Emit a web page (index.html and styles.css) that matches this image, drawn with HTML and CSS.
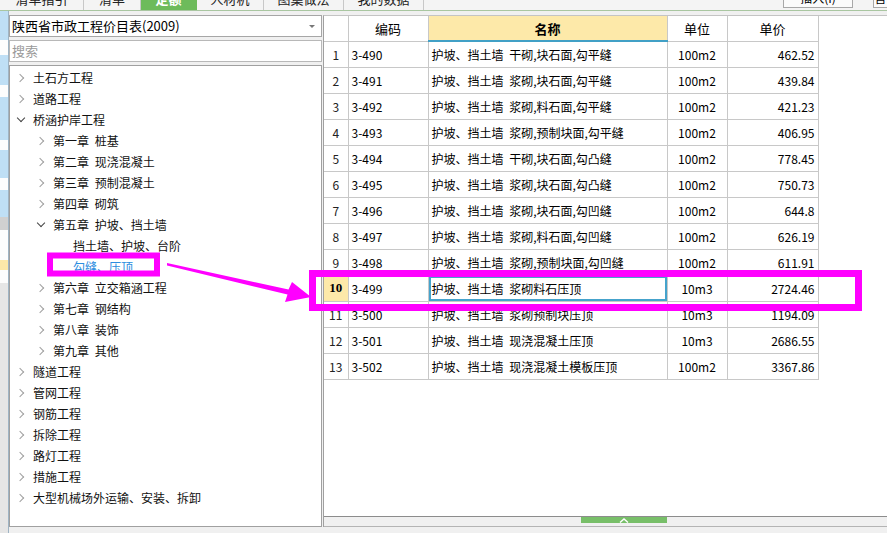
FILE: index.html
```html
<!DOCTYPE html>
<html lang="zh-CN">
<head>
<meta charset="utf-8">
<title>定额查询</title>
<link rel="stylesheet" href="styles.css">
</head>
<body>
<div class="tabbar">
  <div class="tab t1"><span>清单指引</span></div>
  <div class="tab t2"><span>清单</span></div>
  <div class="tab t3 active"><span>定额</span></div>
  <div class="tab t4"><span>人材机</span></div>
  <div class="tab t5"><span>图集做法</span></div>
  <div class="tab t6"><span>我的数据</span></div>
  <div class="tools">
    <div class="btn b1"><span>插入(I)</span></div>
    <div class="btn b2"><span>替换</span></div>
  </div>
</div>
<div class="main">
  <div class="edge"></div>
  <div class="left">
    <div class="select">陕西省市政工程价目表(2009)<span class="caret"></span></div>
    <div class="search">搜索</div>
    <div class="tree">
      <div class="node l0"><span class="ic c"></span>土石方工程</div>
      <div class="node l0"><span class="ic c"></span>道路工程</div>
      <div class="node l0"><span class="ic e"></span>桥涵护岸工程</div>
      <div class="node l1"><span class="ic c"></span>第一章 桩基</div>
      <div class="node l1"><span class="ic c"></span>第二章 现浇混凝土</div>
      <div class="node l1"><span class="ic c"></span>第三章 预制混凝土</div>
      <div class="node l1"><span class="ic c"></span>第四章 砌筑</div>
      <div class="node l1"><span class="ic e"></span>第五章 护坡、挡土墙</div>
      <div class="node l2"><span class="ic"></span>挡土墙、护坡、台阶</div>
      <div class="node l2 selected"><span class="ic"></span>勾缝、压顶</div>
      <div class="node l1"><span class="ic c"></span>第六章 立交箱涵工程</div>
      <div class="node l1"><span class="ic c"></span>第七章 钢结构</div>
      <div class="node l1"><span class="ic c"></span>第八章 装饰</div>
      <div class="node l1"><span class="ic c"></span>第九章 其他</div>
      <div class="node l0"><span class="ic c"></span>隧道工程</div>
      <div class="node l0"><span class="ic c"></span>管网工程</div>
      <div class="node l0"><span class="ic c"></span>钢筋工程</div>
      <div class="node l0"><span class="ic c"></span>拆除工程</div>
      <div class="node l0"><span class="ic c"></span>路灯工程</div>
      <div class="node l0"><span class="ic c"></span>措施工程</div>
      <div class="node l0"><span class="ic c"></span>大型机械场外运输、安装、拆卸</div>
    </div>
  </div>
  <div class="right">
    <table class="grid">
      <colgroup>
        <col class="w-rn"><col class="w-code"><col class="w-name"><col class="w-unit"><col class="w-price">
      </colgroup>
      <thead>
        <tr><th class="rn"></th><th>编码</th><th class="sorted">名称</th><th>单位</th><th>单价</th></tr>
      </thead>
      <tbody>
        <tr><td class="rn">1</td><td>3-490</td><td>护坡、挡土墙 干砌,块石面,勾平缝</td><td class="u">100m2</td><td class="p">462.52</td></tr>
        <tr><td class="rn">2</td><td>3-491</td><td>护坡、挡土墙 浆砌,块石面,勾平缝</td><td class="u">100m2</td><td class="p">439.84</td></tr>
        <tr><td class="rn">3</td><td>3-492</td><td>护坡、挡土墙 浆砌,料石面,勾平缝</td><td class="u">100m2</td><td class="p">421.23</td></tr>
        <tr><td class="rn">4</td><td>3-493</td><td>护坡、挡土墙 浆砌,预制块面,勾平缝</td><td class="u">100m2</td><td class="p">406.95</td></tr>
        <tr><td class="rn">5</td><td>3-494</td><td>护坡、挡土墙 干砌,块石面,勾凸缝</td><td class="u">100m2</td><td class="p">778.45</td></tr>
        <tr><td class="rn">6</td><td>3-495</td><td>护坡、挡土墙 浆砌,块石面,勾凸缝</td><td class="u">100m2</td><td class="p">750.73</td></tr>
        <tr><td class="rn">7</td><td>3-496</td><td>护坡、挡土墙 浆砌,块石面,勾凹缝</td><td class="u">100m2</td><td class="p">644.8</td></tr>
        <tr><td class="rn">8</td><td>3-497</td><td>护坡、挡土墙 浆砌,料石面,勾凹缝</td><td class="u">100m2</td><td class="p">626.19</td></tr>
        <tr><td class="rn">9</td><td>3-498</td><td>护坡、挡土墙 浆砌,预制块面,勾凹缝</td><td class="u">100m2</td><td class="p">611.91</td></tr>
        <tr class="cur"><td class="rn sel">10</td><td>3-499</td><td class="focus">护坡、挡土墙 浆砌料石压顶</td><td class="u">10m3</td><td class="p">2724.46</td></tr>
        <tr><td class="rn">11</td><td>3-500</td><td>护坡、挡土墙 浆砌预制块压顶</td><td class="u">10m3</td><td class="p">1194.09</td></tr>
        <tr><td class="rn">12</td><td>3-501</td><td>护坡、挡土墙 现浇混凝土压顶</td><td class="u">10m3</td><td class="p">2686.55</td></tr>
        <tr><td class="rn">13</td><td>3-502</td><td>护坡、挡土墙 现浇混凝土模板压顶</td><td class="u">100m2</td><td class="p">3367.86</td></tr>
      </tbody>
    </table>
    <div class="fill"></div>
    <div class="bottombar"><div class="grip"><svg width="12" height="6" viewBox="0 0 12 6"><path d="M2 5.5 L6 2 L10 5.5" fill="none" stroke="#fff" stroke-width="1.4"/></svg></div></div>
  </div>
</div>
<svg class="annot" width="887" height="533" viewBox="0 0 887 533">
  <rect x="50" y="255.5" width="107" height="18" fill="none" stroke="#ff00ff" stroke-width="6"/>
  <rect x="312.5" y="273.5" width="546" height="34" fill="none" stroke="#ff00ff" stroke-width="7"/>
  <polygon points="167,263 288.5,289.5 292,282 311,297 285,302 287.5,294.5 167,265.5" fill="#ff00ff"/>
</svg>
</body>
</html>
```

FILE: styles.css
```css
* { box-sizing: border-box; }

body {
  margin: 0;
  width: 887px;
  height: 533px;
  overflow: hidden;
  position: relative;
  background: #f0f0f0;
  font-family: "Noto Sans CJK SC", "Noto Sans", sans-serif;
  font-size: 12px;
  color: #000;
}

/* ---------- top tab strip (cut off) ---------- */
.tabbar {
  height: 11px;
  display: flex;
  background: #f4f4f4;
  border-bottom: 1px solid #a9c6a1;
}
.tab {
  height: 10px;
  overflow: hidden;
  border-right: 1px solid #c8c8c8;
  text-align: center;
  font-size: 13px;
  color: #222;
}
.tab span { display: block; margin-top: -10px; line-height: 18px; }
.t1 { width: 84px; }
.t2 { width: 57px; }
.t3 { width: 56px; }
.t4 { width: 67px; }
.t5 { width: 80px; }
.t6 { width: 80px; }
.tab.active { background: #6dbb5b; color: #fff; font-weight: bold; border-right-color: #6dbb5b; }

.tools { margin-left: auto; display: flex; gap: 20px; }
.btn {
  height: 8px;
  overflow: hidden;
  border: 1px solid #a8a8a8;
  border-top: none;
  background: #fbfbfb;
  text-align: center;
  font-size: 12px;
}
.btn span { display: block; margin-top: -10px; line-height: 16px; }
.b1 { width: 70px; }
.b2 { width: 14px; border-right: none; }

/* ---------- main ---------- */
.main {
  height: 522px;
  display: flex;
  padding: 4px 0 6px 0;
}

.edge {
  width: 9px;
  margin: -4px 0 -6px 0;
  border-right: 1px solid #9fb4c4;
  background: linear-gradient(to bottom,
    #bfdff5 0 29px,
    #fdfdfd 29px 44px,
    #bfdff5 44px 74px,
    #fdfdfd 74px 86px,
    #bfdff5 86px 129px,
    #fdfdfd 129px 139px,
    #bfdff5 139px 167px,
    #fdfdfd 167px 179px,
    #bfdff5 179px 206px,
    #d0d0d0 206px 219px,
    #fdfdfd 219px 249px,
    #fde9a9 249px 259px,
    #fdfdfd 259px 272px,
    #e6e6e6 272px 100%);
}

.left {
  width: 313px;
  margin-right: 1px;
  display: flex;
  flex-direction: column;
  gap: 3px;
}

.select {
  height: 22px;
  border: 1px solid #a6a6a6;
  background: #fff;
  padding-left: 2px;
  line-height: 20px;
  font-size: 13px;
  position: relative;
}
.caret {
  position: absolute;
  right: 6px;
  top: 9px;
  width: 0;
  height: 0;
  border-left: 3px solid transparent;
  border-right: 3px solid transparent;
  border-top: 3px solid #777;
}

.search {
  height: 22px;
  border: 1px solid #b8b8b8;
  background: #fff;
  padding-left: 2px;
  line-height: 20px;
  font-size: 13px;
  color: #9a9a9a;
}

.tree {
  flex: 1;
  border: 1px solid #a0a0a0;
  background: #fff;
  padding-top: 1px;
}
.node {
  height: 21px;
  line-height: 21px;
  display: flex;
  align-items: center;
  white-space: pre;
  word-spacing: 3px;
  color: #111;
}
.node.l0 { padding-left: 6px; }
.node.l1 { padding-left: 26px; }
.node.l2 { padding-left: 46px; }
.node.selected { color: #2b8de0; }

.ic {
  width: 17px;
  height: 21px;
  flex: none;
  position: relative;
}
.ic.c::before {
  content: "";
  position: absolute;
  left: 1px;
  top: 7.5px;
  width: 5px;
  height: 5px;
  border-right: 1.3px solid #a0a0a0;
  border-top: 1.3px solid #a0a0a0;
  transform: rotate(45deg);
}
.ic.e::before {
  content: "";
  position: absolute;
  left: 1.5px;
  top: 6px;
  width: 5px;
  height: 5px;
  border-right: 1.4px solid #444;
  border-bottom: 1.4px solid #444;
  transform: rotate(45deg);
}

/* ---------- right grid ---------- */
.right {
  flex: 1;
  background: #fff;
  border-left: 1px solid #a0a0a0;
  border-top: 1px solid #c4c4c4;
  display: flex;
  flex-direction: column;
}

.grid {
  border-collapse: collapse;
  table-layout: fixed;
  width: 494px;
}
.w-rn { width: 24px; }
.w-code { width: 80px; }
.w-name { width: 239px; }
.w-unit { width: 60px; }
.w-price { width: 91px; }

.grid th, .grid td {
  border: 1px solid #c8c8c8;
  padding: 0 3px;
  white-space: nowrap;
  overflow: hidden;
}
.grid td { word-spacing: 3px; }
.grid th {
  height: 25px;
  border-top: none;
  font-weight: normal;
  font-size: 13px;
  text-align: center;
}
.grid th.sorted {
  background: #fde9a9;
  font-weight: bold;
  border-bottom: 2px solid #41a0c6;
}
.grid th:first-child, .grid td:first-child { border-left: none; }
.grid td { height: 26px; }
.grid td.rn { text-align: center; padding: 0; color: #222; }
.grid td.u { text-align: center; }
.grid td.p { text-align: right; }
.grid td.rn.sel {
  background: #fde9a9;
  font-family: "Liberation Serif", "DejaVu Serif", serif;
  font-weight: bold;
  font-size: 13px;
  color: #000;
}
.grid td.focus { box-shadow: inset 0 0 0 2px #45a3cc; }

.fill { flex: 1; }

.bottombar {
  height: 11px;
  border-top: 1px solid #8c8c8c;
  border-bottom: 1px solid #b4b4b4;
  background: #f0f0f0;
}
.grip {
  margin-left: 257px;
  width: 86px;
  height: 6px;
  background: #78bf69;
  display: flex;
  justify-content: center;
  align-items: flex-end;
}
.grip svg { display: block; }

/* ---------- annotation overlay ---------- */
.annot {
  position: absolute;
  left: 0;
  top: 0;
  pointer-events: none;
}
```
